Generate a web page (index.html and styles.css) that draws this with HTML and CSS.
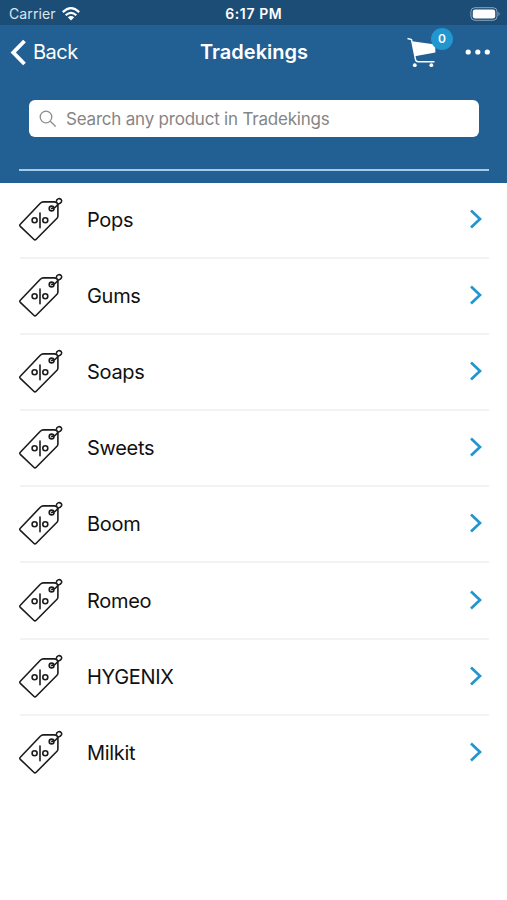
FILE: index.html
```html
<!DOCTYPE html>
<html lang="en">
<head>
<meta charset="utf-8">
<title>Tradekings</title>
<link rel="stylesheet" href="styles.css">
</head>
<body>
<svg class="defs" width="0" height="0" aria-hidden="true">
  <symbol id="tag" viewBox="0 0 46 46">
    <g fill="none" stroke="#1c1c1c" stroke-width="1.6" stroke-linejoin="round" stroke-linecap="round">
      <path d="M2.300 27.200 22.300 6.200Q23.600 4.900 25.400 4.900H36.200Q39.900 4.900 39.900 8.600V19Q39.900 20.300 39 21.200L18.200 42.300Q17 43.500 15.800 42.300L2.300 29.300Q1.200 28.300 2.300 27.200Z"/>
      <circle cx="16.600" cy="23.300" r="2.500"/><circle cx="27.300" cy="23.300" r="2.500"/>
      <path d="M22 16V30.800"/>
      <circle cx="33.600" cy="11.500" r="2.400"/>
      <path d="M33.600 11.500 37 10.500 40.500 7C43.500 5.900 44.500 3.800 43 2.300 41.200.8 38.300 2 38.500 4.300"/>
    </g>
  </symbol>
  <symbol id="next" viewBox="0 0 14 20">
    <path d="M2 1.500 11 10 2 18.500" fill="none" stroke="#2196cf" stroke-width="2.700"/>
  </symbol>
</svg>
<header class="top">
  <div class="status">
    <span class="carrier">Carrier</span>
    <svg class="wifi" width="18" height="14" viewBox="0 0 18 14"><g fill="none" stroke="#fff" stroke-width="2.200"><path d="M.8 5.100Q9-2.700 17.200 5.100"/><path d="M3.700 8.300Q9 3.500 14.300 8.300"/></g><path d="M9 13.600 5.800 10.300Q9 7.700 12.200 10.300Z" fill="#fff"/></svg>
    <span class="time">6:17 PM</span>
    <svg class="battery" width="31" height="14" viewBox="0 0 31 14"><rect x=".9" y=".7" width="26.200" height="12.600" rx="4" fill="none" stroke="#8ba6be" stroke-width="1"/><rect x="2.800" y="2.500" width="22.400" height="9" rx="2.300" fill="#fff"/><path d="M28.500 4.800Q30.600 7 28.500 9.200Z" fill="#8ba6be"/></svg>
  </div>
  <nav class="nav">
    <a class="back"><svg width="17" height="27" viewBox="0 0 17 27"><path d="M14.500 2 3.300 13.500 14.500 25" fill="none" stroke="#fff" stroke-width="3.900"/></svg><span>Back</span></a>
    <h1>Tradekings</h1>
    <div class="actions">
      <div class="cart">
        <svg width="30" height="31" viewBox="0 0 30 31"><path d="M.5 1.500 4.500 2.500 8.500 22.500Q9 24.700 11.200 24.700H27.500" fill="none" stroke="#fff" stroke-width="1.400"/><path d="M5 4.300 28.300 7.500V15.500L7.800 19.300Z" fill="#fff"/><circle cx="7.800" cy="28.200" r="1.900" fill="#fff"/><circle cx="24.300" cy="28.200" r="1.900" fill="#fff"/></svg>
        <span class="badge">0</span>
      </div>
      <svg class="more" width="26" height="6" viewBox="0 0 26 6" fill="#fff"><circle cx="3.200" cy="3" r="2.600"/><circle cx="12.800" cy="3" r="2.600"/><circle cx="22.300" cy="3" r="2.600"/></svg>
    </div>
  </nav>
  <div class="search">
    <svg width="18" height="18" viewBox="0 0 18 18" fill="none" stroke="#8c8c8c" stroke-width="1.300"><circle cx="7" cy="7" r="5.800"/><path d="M11.300 11.300 16.700 16.500"/></svg>
    <span>Search any product in Tradekings</span>
  </div>
  <div class="rule"></div>
</header>
<ul class="list">
  <li><svg class="tag"><use href="#tag"/></svg><span>Pops</span><svg class="next"><use href="#next"/></svg></li>
  <li><svg class="tag"><use href="#tag"/></svg><span>Gums</span><svg class="next"><use href="#next"/></svg></li>
  <li><svg class="tag"><use href="#tag"/></svg><span>Soaps</span><svg class="next"><use href="#next"/></svg></li>
  <li><svg class="tag"><use href="#tag"/></svg><span>Sweets</span><svg class="next"><use href="#next"/></svg></li>
  <li><svg class="tag"><use href="#tag"/></svg><span>Boom</span><svg class="next"><use href="#next"/></svg></li>
  <li><svg class="tag"><use href="#tag"/></svg><span>Romeo</span><svg class="next"><use href="#next"/></svg></li>
  <li><svg class="tag"><use href="#tag"/></svg><span>HYGENIX</span><svg class="next"><use href="#next"/></svg></li>
  <li><svg class="tag"><use href="#tag"/></svg><span>Milkit</span><svg class="next"><use href="#next"/></svg></li>
</ul>
</body>
</html>
```
FILE: styles.css
```css
* { box-sizing: border-box; }
body { margin: 0; height: 900px; background: #fff; color: #111; font-family: Inter, "Liberation Sans", sans-serif; overflow: hidden; }
svg { display: block; flex: none; }
.defs { position: absolute; }
.top { height: 183px; background: #225f93; color: #fff; }
.status { height: 25px; background: #1c4d77; display: grid; grid-template-columns: 1fr 18px 120px 1fr; grid-template-columns: auto auto 1fr auto; align-items: center; padding: 2px 6px 0 9px; }
.carrier { font-size: 14px; letter-spacing: .1px; color: #dbe5ee; }
.wifi { margin-left: 6px; }
.time { justify-self: center; width: 58px; margin-left: -42px; text-align: center; white-space: nowrap; font-size: 14px; font-weight: 600; letter-spacing: .6px; }
.nav { height: 54px; display: grid; grid-template-columns: 1fr auto 1fr; align-items: center; padding: 0 16px 0 10px; }
.back { display: flex; align-items: center; gap: 6px; font-size: 20px; letter-spacing: -.5px; }
h1 { margin: 0 -3px 0 4px; font-size: 20px; font-weight: 600; letter-spacing: 0; }
.actions { display: flex; align-items: center; justify-content: flex-end; gap: 28px; }
.cart { position: relative; }
.badge { position: absolute; left: 24px; top: -9px; width: 22px; height: 22px; border-radius: 50%; background: #2196cf; font-size: 12px; font-weight: 600; line-height: 22px; text-align: center; }
.search { height: 37px; margin: 21px 28px 0 29px; padding: 0 10px; background: #fff; border-radius: 6px; display: flex; align-items: center; gap: 9px; color: #858585; font-size: 17px; letter-spacing: -.21px; white-space: nowrap; }
.rule { height: 2px; margin: 32px 18px 0 19px; background: #a5cbe9; }
.list { list-style: none; margin: 0; padding: 0 18px 0 20px; }
li { height: 76.1px; display: flex; align-items: center; border-bottom: 2px solid #f3f3f3; font-size: 20px; letter-spacing: -.3px; }
li:last-child { border-bottom-color: transparent; }
.tag { width: 46px; height: 46px; margin: 0 23px 0 -2px; }
.next { width: 14px; height: 20px; margin: 0 6px 2px auto; }
```
